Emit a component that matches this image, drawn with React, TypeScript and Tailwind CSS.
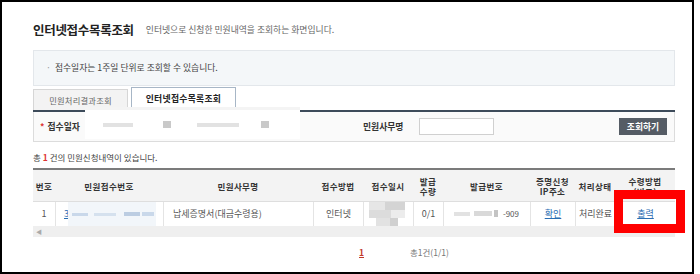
import React from 'react';

// columns of the result table, in px
const cols = 'grid-cols-[22px_108px_150px_50px_50px_30px_87px_45px_40px_60px]';

function Mosaic({ blocks }: { blocks: { l: number; t: number; w: number; h: number; c: string }[] }) {
  return (
    <>
      {blocks.map((b, i) => (
        <span
          key={i}
          className="absolute"
          style={{ left: b.l, top: b.t, width: b.w, height: b.h, background: b.c }}
        />
      ))}
    </>
  );
}

export default function App() {
  return (
    <div className="relative w-[694px] h-[274px] border-2 border-black bg-white overflow-hidden font-['Noto_Sans_CJK_KR',sans-serif] text-[#333]">
      <div className="pl-[31px] pr-[17px] pt-[20px]">
        {/* Title */}
        <div className="flex items-center h-[16px]">
          <h2 className="text-[12.5px] font-bold tracking-[-0.3px] text-[#222] leading-none">인터넷접수목록조회</h2>
          <span className="ml-[12px] text-[8.8px] text-[#666] leading-none">인터넷으로 신청한 민원내역을 조회하는 화면입니다.</span>
        </div>

        {/* Notice box */}
        <div className="mt-[12px] h-[36px] border border-[#e3e7eb] bg-[#f4f7f9] flex items-center pl-[12px] text-[8.8px] text-[#444]">
          <span className="text-[#999] mr-[4px]">·</span>
          접수일자는 1주일 단위로 조회할 수 있습니다.
        </div>

        {/* Tabs */}
        <div className="mt-[2px] h-[24px] flex items-end border-b-2 border-[#3d4b5a]">
          <div className="w-[95px] h-[21px] border border-b-0 border-[#d6d6d6] bg-[#f3f3f3] flex items-center justify-center text-[8.3px] tracking-[0.2px] text-[#666]">
            민원처리결과조회
          </div>
          <div className="ml-[3px] w-[105px] h-[23px] border border-b-0 border-[#a7b6c6] bg-white flex items-center justify-center text-[8.8px] font-bold tracking-[0.3px] text-[#222]">
            인터넷접수목록조회
          </div>
        </div>

        {/* Search row */}
        <div className="relative h-[30px] border-x border-b border-[#dcdcdc] bg-[#fafafa] flex items-center text-[8.8px] font-bold">
          <div className="w-[329px] pl-[6px] flex items-center">
            <span className="text-[#d33] mr-[3px]">*</span>
            접수일자
          </div>
          <div className="w-[56px]">민원사무명</div>
          <div className="w-[75px] h-[17px] border border-[#d0d0d0] bg-white" />
          <button className="ml-auto mr-[7px] w-[48px] h-[17px] bg-[#555c65] text-white text-[8.8px] font-bold">조회하기</button>

          {/* masked date fields */}
          <div className="absolute left-[51px] top-[-5px] w-[215px] h-[32px] bg-white">
            <Mosaic
              blocks={[
                { l: 18, t: 16, w: 30, h: 4, c: '#e2e2e2' },
                { l: 78, t: 14, w: 8, h: 7, c: '#c9c9c9' },
                { l: 112, t: 16, w: 42, h: 4, c: '#e2e2e2' },
                { l: 176, t: 14, w: 8, h: 7, c: '#c9c9c9' },
                { l: 0, t: 0, w: 215, h: 3, c: '#f4f4f4' },
              ]}
            />
          </div>
        </div>

        {/* Count */}
        <p className="mt-[9px] h-[12px] flex items-center text-[8.5px] text-[#444]">
          총&nbsp;<b className="text-[#d33]">1</b>&nbsp;건의 민원신청내역이 있습니다.
        </p>

        {/* Table */}
        <div className="mt-[5px] border-t-2 border-[#7b7b7b]">
          <div className={`grid ${cols} h-[31px] bg-[#f3f3f3] text-[8.5px] font-bold text-[#333] leading-[10px]`}>
            {['번호', '민원접수번호', '민원사무명', '접수방법', '접수일시', '발급\n수량', '발급번호', '증명신청\nIP주소', '처리상태', '수령방법\n(비고)'].map((h) => (
              <div key={h} className="flex items-center justify-center text-center whitespace-pre tracking-[0.4px]">
                {h}
              </div>
            ))}
          </div>
          <div className={`grid ${cols} h-[25px] border-t border-[#dedede] bg-white text-[9px] text-[#555]`}>
            <div className="flex items-center justify-center">1</div>
            <div className="relative flex items-center pl-[8px] border-l border-[#e4e4e4]">
              <span className="text-[#2a6db3] underline">3</span>
              <div className="absolute left-[12px] top-0 w-[88px] h-full bg-[#f2f6fa]">
                <Mosaic
                  blocks={[
                    { l: 4, t: 11, w: 16, h: 3, c: '#c9d8ea' },
                    { l: 26, t: 11, w: 22, h: 3, c: '#d5e1ee' },
                    { l: 56, t: 10, w: 16, h: 4, c: '#bccde2' },
                    { l: 74, t: 10, w: 12, h: 4, c: '#c9d8ea' },
                  ]}
                />
              </div>
            </div>
            <div className="flex items-center pl-[9px] border-l border-[#e4e4e4]">납세증명서(대금수령용)</div>
            <div className="flex items-center justify-center border-l border-[#e4e4e4]">인터넷</div>
            <div className="relative border-l border-[#e4e4e4]">
              <Mosaic
                blocks={[
                  { l: 5, t: 0, w: 16, h: 8, c: '#e6e6e6' },
                  { l: 21, t: 0, w: 20, h: 8, c: '#d4d4d4' },
                  { l: 5, t: 8, w: 22, h: 8, c: '#dcdcdc' },
                  { l: 27, t: 8, w: 14, h: 8, c: '#ececec' },
                  { l: 12, t: 16, w: 14, h: 8, c: '#e2e2e2' },
                  { l: 26, t: 16, w: 8, h: 8, c: '#d0d0d0' },
                ]}
              />
            </div>
            <div className="flex items-center justify-center border-l border-[#e4e4e4]">0/1</div>
            <div className="relative flex items-center justify-end pr-[11px] border-l border-[#e4e4e4]">
              <Mosaic
                blocks={[
                  { l: 10, t: 10, w: 16, h: 4, c: '#e2e2e2' },
                  { l: 30, t: 9, w: 18, h: 5, c: '#d9d9d9' },
                  { l: 50, t: 8, w: 4, h: 7, c: '#c4c4c4' },
                ]}
              />
              <span className="text-[8px]">-909</span>
            </div>
            <div className="flex items-center justify-center border-l border-[#e4e4e4]">
              <span className="text-[#2a6db3] underline">확인</span>
            </div>
            <div className="flex items-center justify-center border-l border-[#e4e4e4]">처리완료</div>
            <div className="flex items-center justify-center border-l border-[#e4e4e4]">
              <span className="text-[#2a6db3] underline">출력</span>
            </div>
          </div>
          {/* horizontal scroll track */}
          <div className="h-[11px] bg-[#efefef] flex items-center pl-[3px] text-[6px] text-[#aaa]">◀</div>
        </div>

        {/* Paging */}
        <div className="h-[30px] flex items-center text-[8.5px]">
          <span className="ml-[326px] text-[#c0392b] font-bold underline">1</span>
          <span className="ml-[46px] text-[#777]">총1건(1/1)</span>
        </div>
      </div>

      {/* red highlight */}
      <div className="absolute left-[612px] top-[188px] w-[71px] h-[43px] border-[9px] border-[#ff0000]" />
    </div>
  );
}
